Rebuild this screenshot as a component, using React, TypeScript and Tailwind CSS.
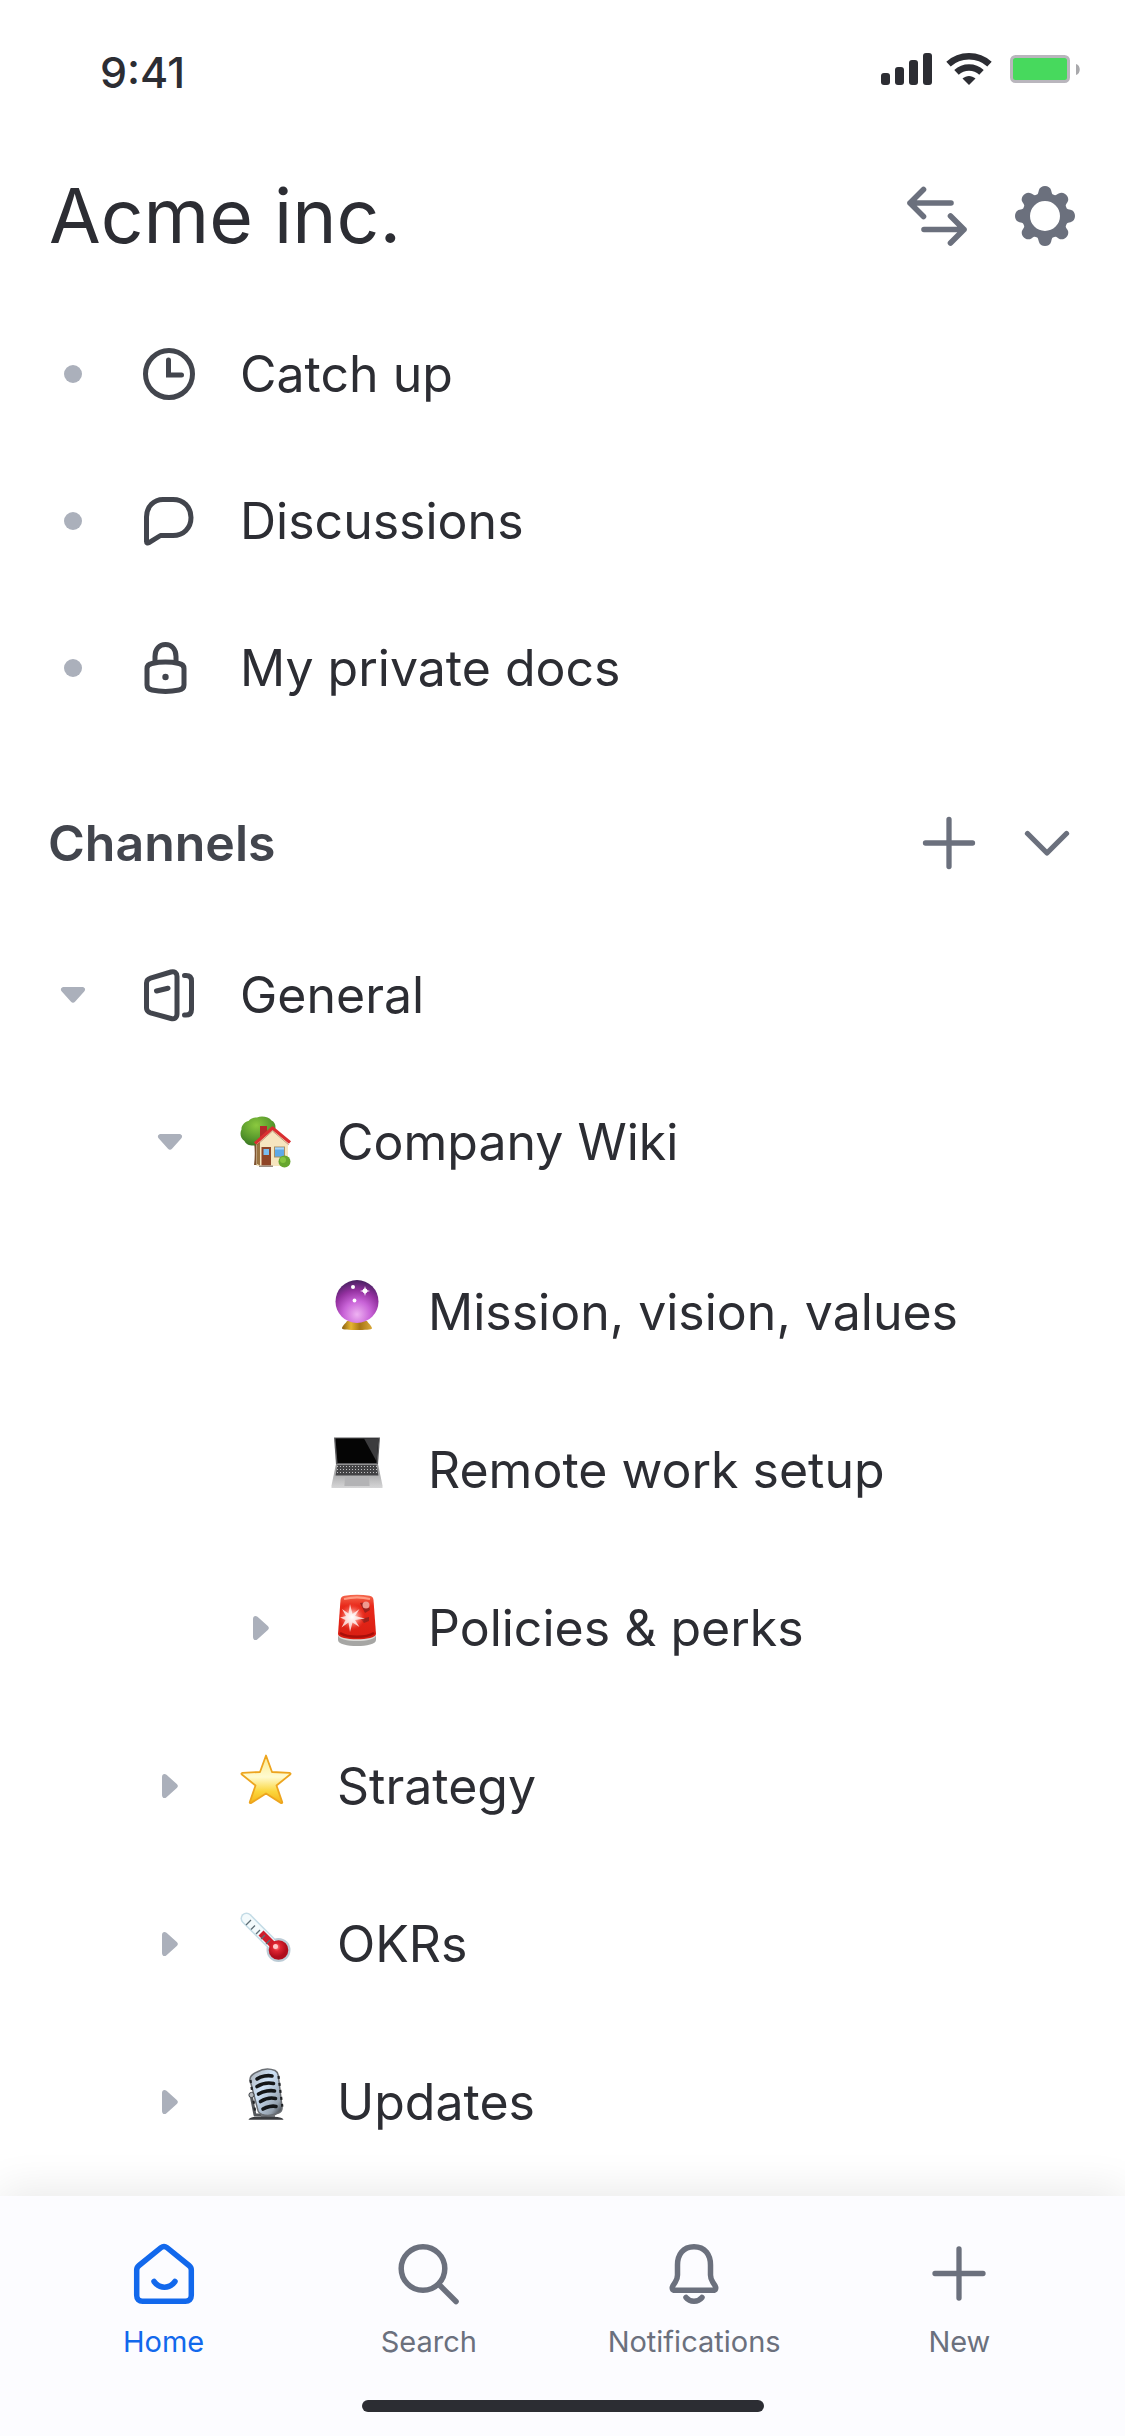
import type { ReactNode } from "react";

const stroke = {
  fill: "none",
  stroke: "currentColor",
  strokeLinecap: "round" as const,
  strokeLinejoin: "round" as const,
};

/* ---------- Status bar ---------- */

function Signal() {
  return (
    <svg width="52" height="34" viewBox="0 0 52 34" fill="currentColor" aria-label="Signal">
      <rect x="0" y="21" width="9" height="12" rx="3" />
      <rect x="14" y="15" width="9" height="18" rx="3" />
      <rect x="28" y="8" width="9" height="25" rx="3" />
      <rect x="42" y="1" width="9" height="32" rx="3" />
    </svg>
  );
}

function Wifi() {
  return (
    <svg width="48" height="34" viewBox="0 0 48 34" fill="none" stroke="currentColor" aria-label="Wi-Fi">
      <path d="M3.500 12.200C15 1.700 33 1.700 44.500 12.200" strokeWidth="6.500" />
      <path d="M11.500 20.400C18.500 13.800 29.500 13.800 36.500 20.400" strokeWidth="6.500" />
      <path d="M17.500 26.600C21.500 23.200 26.500 23.200 30.500 26.600L24 33Z" fill="currentColor" stroke="none" />
    </svg>
  );
}

function Battery() {
  return (
    <svg width="71" height="30" viewBox="0 0 71 30" aria-label="Battery">
      <rect x="1.500" y="2.500" width="57" height="25" rx="4" fill="#47d95d" stroke="#b9b6bd" strokeWidth="3" />
      <path d="M66 10v11c5-1 5-10 0-11Z" fill="#a9a9ac" />
    </svg>
  );
}

/* ---------- Interface icons ---------- */

function SwapIcon() {
  return (
    <svg width="62" height="62" viewBox="0 0 62 62" {...stroke} strokeWidth="5.600">
      <path d="M45 18H4M17.500 4.500L4 18l13.500 13.500" />
      <path d="M18 44.500h40M44.500 31L58 44.500 44.500 58" />
    </svg>
  );
}

const toothAngles = [0, 45, 90, 135, 180, 225, 270, 315];

function GearIcon() {
  return (
    <svg width="62" height="62" viewBox="-31 -31 62 62" fill="currentColor">
      <circle r="19" fill="none" stroke="currentColor" strokeWidth="8" />
      {toothAngles.map((a) => (
        <path
          key={a}
          transform={`rotate(${a})`}
          d="M-11 -19C-7.500 -20-7 -22-6.200 -25.500C-5 -31.500 5 -31.500 6.200 -25.500C7 -22 7.500 -20 11 -19Z"
        />
      ))}
    </svg>
  );
}

function ClockIcon() {
  return (
    <svg width="54" height="54" viewBox="0 0 54 54" {...stroke} strokeWidth="5">
      <circle cx="27" cy="27" r="23.500" />
      <path d="M26.500 13v15h13" strokeLinejoin="miter" />
    </svg>
  );
}

function BubbleIcon() {
  return (
    <svg width="54" height="54" viewBox="0 0 54 54" {...stroke} strokeWidth="5">
      <path d="M4.500 47.500V23C4.500 12.500 12 5.500 21 5.500h10C41.500 5.500 49 13 49 23.500S41.500 41.500 31 41.500H18.500L7 48.700c-1.400.8-2.500.2-2.500-1.200Z" />
    </svg>
  );
}

function LockIcon() {
  return (
    <svg width="54" height="54" viewBox="0 0 54 54" {...stroke} strokeWidth="5">
      <path d="M13 21.500v-6C13 8 17.500 3.500 23.500 3.500S34 8 34 15.500v6" />
      <path d="M10 22.500c8-1.700 19-1.700 27 0 3 .6 5 2.500 5 5V44c0 2.500-2 4.400-5 5-8 1.700-19 1.700-27 0-3-.6-5-2.500-5-5V27.500c0-2.500 2-4.400 5-5Z" />
      <circle cx="23.500" cy="36" r="3.200" fill="currentColor" stroke="none" />
    </svg>
  );
}

function BookIcon() {
  return (
    <svg width="54" height="54" viewBox="0 0 54 54" {...stroke} strokeWidth="5">
      <path d="M8.500 10.200L29 4c3.500-1 6 1 6 4.500V46c0 3.500-2.500 5.500-6 4.500L8.500 44.800c-2.500-.8-4-2.300-4-4.800V15c0-2.500 1.500-4 4-4.800Z" />
      <path d="M14.500 23l11.500-2.800" />
      <path d="M42.500 7.500h1.500c3.500 0 5.500 2 5.500 5.500v28.500c0 3.500-2 5.500-5.500 5.500h-1.500" />
    </svg>
  );
}

function PlusIcon() {
  return (
    <svg width="60" height="60" viewBox="0 0 60 60" {...stroke} strokeWidth="5.300">
      <path d="M30 6.500v47M6.500 30h47" />
    </svg>
  );
}

function ChevronIcon() {
  return (
    <svg width="60" height="60" viewBox="0 0 60 60" {...stroke} strokeWidth="5.300">
      <path d="M10.500 20.500L30 40l19.500-19.500" />
    </svg>
  );
}

function Dot() {
  return <span className="size-[18px] rounded-full bg-[#abb0bb]" />;
}

function TriangleDown() {
  return (
    <svg width="26" height="18" viewBox="0 0 26 18" fill="#abb0bb">
      <path d="M4 1h18c3 0 4 2.500 2.200 4.500L15 15.800c-1.200 1.400-2.800 1.400-4 0L1.800 5.500C0 3.500 1 1 4 1Z" />
    </svg>
  );
}

function TriangleRight() {
  return (
    <svg width="18" height="26" viewBox="0 0 18 26" fill="#abb0bb">
      <path d="M1 4v18c0 3 2.500 4 4.500 2.200L15.800 15c1.400-1.200 1.400-2.800 0-4L5.500 1.800C3.500 0 1 1 1 4Z" />
    </svg>
  );
}

/* ---------- Page pictograms ---------- */

function HouseEmoji() {
  return (
    <svg width="54" height="54" viewBox="0 0 54 54">
      <defs>
        <radialGradient id="tree" cx=".45" cy=".3" r=".7">
          <stop offset="0" stopColor="#8bc93f" />
          <stop offset=".7" stopColor="#55962b" />
          <stop offset="1" stopColor="#3c7a25" />
        </radialGradient>
      </defs>
      <path d="M15 27h6v23h-6c1-8 1-15 0-23Z" fill="#7d5230" />
      <path
        d="M18 2.500c5-2 12-.5 14.500 3 4 1.500 5 7 3 11-1.500 4-6 6-8 9-2 4-6 6-9.500 4.500C13 31.500 7 30 5.500 26 1.500 24 .5 18 2.500 14.500 2 10 6.500 6.500 9.500 6c2-2.500 5-3.500 8.500-3.500Z"
        fill="url(#tree)"
      />
      <path d="M21 11h7v12h-7z" fill="#b5282b" />
      <path d="M17.500 28L34 13l15 15v23H17.500z" fill="#f6e5bf" />
      <path d="M18 29v20l3 1.500V27z" fill="#9a7341" />
      <path d="M16 28.500L33.500 13 51 27.500" fill="none" stroke="#d92f31" strokeWidth="3.200" strokeLinejoin="round" />
      <path d="M18 30L33.500 16 50 30" fill="none" stroke="#8b4a35" strokeWidth=".8" opacity=".6" />
      <rect x="22.500" y="32" width="9.500" height="18.500" fill="#8f4527" />
      <rect x="24.500" y="34" width="5.500" height="6" fill="#79bdf0" />
      <rect x="35.500" y="32" width="10" height="10" fill="#5ea9e8" stroke="#a98f63" />
      <path d="M36 32.500h9v2h-9z" fill="#a5d5fa" />
      <path d="M20 50.500h14v1.500H20z" fill="#9a8f85" />
      <circle cx="45.500" cy="46.500" r="6" fill="#66a62f" />
      <circle cx="44" cy="45" r="3" fill="#86c541" />
    </svg>
  );
}

function CrystalEmoji() {
  return (
    <svg width="54" height="54" viewBox="0 0 54 54">
      <defs>
        <radialGradient id="orb" cx=".5" cy=".8" r=".78">
          <stop offset="0" stopColor="#eeb2f2" />
          <stop offset=".4" stopColor="#c964d8" />
          <stop offset=".72" stopColor="#93309f" />
          <stop offset="1" stopColor="#4d2265" />
        </radialGradient>
        <linearGradient id="brass" x1="0" x2="1">
          <stop offset="0" stopColor="#8a5f12" />
          <stop offset=".3" stopColor="#e6b530" />
          <stop offset=".6" stopColor="#a87613" />
          <stop offset="1" stopColor="#d9a93a" />
        </linearGradient>
      </defs>
      <path d="M17 43h20c1.500 2.500 5 5 5 7.500 0 2-30 2-30 0 0-2.500 3.500-5 5-7.500Z" fill="url(#brass)" />
      <circle cx="27" cy="23.500" r="21.500" fill="url(#orb)" />
      <circle cx="23" cy="9" r="2" fill="#fff" />
      <path d="M35 8l1 4 4 1-4 1-1 4-1-4-4-1 4-1z" fill="#fff" />
      <circle cx="35" cy="13" r="2.400" fill="#fff" />
      <circle cx="24.500" cy="22.500" r="1.900" fill="#fff" />
    </svg>
  );
}

const keyRows = [30.5, 33.5, 36.5];

function LaptopEmoji() {
  return (
    <svg width="54" height="54" viewBox="0 0 54 54">
      <defs>
        <linearGradient id="body" x1="0" x2="0" y1="0" y2="1">
          <stop offset="0" stopColor="#8f8f90" />
          <stop offset="1" stopColor="#d6d6d7" />
        </linearGradient>
      </defs>
      <path d="M4 1.500h46l-2 27H6z" fill="#5b5b5d" />
      <path d="M5.500 2.500h43l-2 24.500H7.500z" fill="#050505" />
      <path d="M34 2.500h14.500l-1.900 23z" fill="#3c3c3e" />
      <path d="M6 28h42l4.500 21.500v2.500H1.500v-2.500z" fill="url(#body)" />
      <path d="M7.500 29h39l2 10.500h-43z" fill="#444446" />
      {keyRows.map((y) => (
        <path key={y} d={`M7 ${y}h40`} stroke="#c3c3c4" strokeWidth="1.200" strokeDasharray="1 2" />
      ))}
      <path d="M15 41h24l.6 9H14.400z" fill="#b3b3b5" />
    </svg>
  );
}

function SirenEmoji() {
  return (
    <svg width="54" height="54" viewBox="0 0 54 54">
      <defs>
        <linearGradient id="lamp" x1="0" x2="0" y1="0" y2="1">
          <stop offset="0" stopColor="#f4694f" />
          <stop offset=".25" stopColor="#e92a1b" />
          <stop offset="1" stopColor="#d81d12" />
        </linearGradient>
        <radialGradient id="flare">
          <stop offset="0" stopColor="#fff" />
          <stop offset=".4" stopColor="#ffb5aa" stopOpacity=".8" />
          <stop offset="1" stopColor="#ff5040" stopOpacity="0" />
        </radialGradient>
      </defs>
      <path d="M8 42h38v4c0 8-38 8-38 0z" fill="#a6a6a4" />
      <path d="M8 41h38c0 8-38 8-38 0z" fill="#dadad7" />
      <path d="M10.500 6c.3-3 1.500-3.800 4-4.300 8-1.300 17-1.300 25 0 2.500.5 3.700 1.300 4 4.300L46 40c0 7-38 7-38 0z" fill="url(#lamp)" />
      <path d="M10 39c8 5 26 5 34 0" fill="none" stroke="#a80f0a" strokeWidth="2.500" />
      <path d="M14 5c8-2 18-2 26 0" fill="none" stroke="#ff9b83" strokeWidth="2" />
      <path d="M30 9l8-1 2 8-5 3zM31 25l8-2v4l-5 2z" fill="#9e211c" />
      <circle cx="36" cy="11" r="3.500" fill="#ef9a90" />
      <circle cx="22" cy="23" r="13" fill="url(#flare)" />
      <path
        d="M20 10l2.500 10 7-5-4.500 7 10 2.500-10 1.500 4.500 7-7-4.500L20 38l-1.500-9.500-7 5 4-7.500-5.500-2.500 6-1.500-4-7 6.500 4.500z"
        fill="#fff"
        opacity=".75"
      />
    </svg>
  );
}

function StarEmoji() {
  return (
    <svg width="54" height="54" viewBox="0 0 54 54">
      <defs>
        <linearGradient id="star" x1="0" x2="0" y1="0" y2="1">
          <stop offset="0" stopColor="#fbe98a" />
          <stop offset=".45" stopColor="#fffbd0" />
          <stop offset=".75" stopColor="#fbd63e" />
          <stop offset="1" stopColor="#f6b416" />
        </linearGradient>
      </defs>
      <path
        d="M27 3.500l6 16.500 17.500.8c1.200.1 1.400 1 .6 1.700L37.500 33.500 43.200 50c.3 1-.5 1.500-1.400 1L27 41.500 12.200 51c-.9.500-1.700 0-1.400-1l5.700-16.500L2.900 22.500c-.8-.7-.6-1.600.6-1.700L21 20z"
        fill="url(#star)"
        stroke="#eda51f"
        strokeWidth="1.800"
        strokeLinejoin="round"
      />
    </svg>
  );
}

function ThermometerEmoji() {
  return (
    <svg width="54" height="54" viewBox="0 0 54 54">
      <defs>
        <radialGradient id="bulb" cx=".4" cy=".35">
          <stop offset="0" stopColor="#ff8d8d" />
          <stop offset=".4" stopColor="#de2531" />
          <stop offset="1" stopColor="#b00d1c" />
        </radialGradient>
      </defs>
      <path d="M7.500 8.500L36 37" stroke="#c4dce6" strokeWidth="12" strokeLinecap="round" />
      <circle cx="39.500" cy="40" r="12" fill="#bcccd6" />
      <path d="M7.500 8.500L36 37" stroke="#f3fafc" strokeWidth="9" strokeLinecap="round" />
      <path d="M22 23l14 14" stroke="#cf1c2b" strokeWidth="7" />
      <path d="M7 15l5-5M12 19.500l4-4M17 24l4-4M22 29l4-4M27 34l4-4" stroke="#5c6d75" strokeWidth="1.300" />
      <circle cx="39.500" cy="40" r="9.800" fill="url(#bulb)" />
      <circle cx="36.500" cy="36.500" r="2.500" fill="#ffc9c9" />
    </svg>
  );
}

function MicEmoji() {
  return (
    <svg width="54" height="54" viewBox="0 0 54 54">
      <defs>
        <linearGradient id="mic" x1="0" x2="1" y1="0" y2="1">
          <stop offset="0" stopColor="#a9adb2" />
          <stop offset=".4" stopColor="#cfe3f8" />
          <stop offset=".8" stopColor="#94a0ad" />
          <stop offset="1" stopColor="#2b2d30" />
        </linearGradient>
      </defs>
      <path d="M12 27l4 20h18l8-6" fill="none" stroke="#55585c" strokeWidth="3" strokeLinejoin="round" />
      <path d="M22 45h14v5H22z" fill="#777b80" />
      <path d="M11 51c2-2.500 30-2.500 32 0z" fill="#3b3d40" stroke="#3b3d40" strokeWidth="1.500" />
      <path
        d="M18 4c6-3.500 13-3.500 18-1.500 2 1 3 3 3.300 5L43 39c.4 3-1 5-3.500 6-6 2.500-12 3-16.500 1.500-2.500-1-4-2.500-4.300-5L11 12c-.3-4 3.500-6.500 7-8Z"
        fill="url(#mic)"
        stroke="#6a6e73"
        strokeWidth="1.500"
      />
      <path
        d="M18 11c4-3 11-4 15-3M18 18.500c5-3 12-4 16.500-3M19.500 26c5-3 12-4 16-3M21.500 33.500c5-3 11-4 15-3M24 41c4-2.500 10-3.500 13-2.500"
        fill="none"
        stroke="#141618"
        strokeWidth="3.600"
        strokeLinecap="round"
      />
      <path d="M11.500 12L16 43M39.500 8L43.500 40" stroke="#222427" strokeWidth="2.200" strokeDasharray="3 4" />
      <circle cx="12.500" cy="27" r="2.600" fill="#b5bac0" stroke="#44474b" />
    </svg>
  );
}

/* ---------- Tab bar icons ---------- */

function HomeIcon() {
  return (
    <svg width="64" height="64" viewBox="0 0 64 64" {...stroke} strokeWidth="5.500">
      <path d="M29 5.700c1.800-1.400 4.200-1.400 6 0L57 23.500c1.600 1.300 2.300 2.500 2.300 4.500v25.500c0 3.500-2.300 5.800-5.800 5.800h-43c-3.500 0-5.800-2.300-5.800-5.800V28c0-2 .7-3.200 2.300-4.500Z" />
      <path d="M22 39.500c5.500 7.500 15.500 7.500 21 0" />
    </svg>
  );
}

function SearchIcon() {
  return (
    <svg width="64" height="64" viewBox="0 0 64 64" {...stroke} strokeWidth="5.500">
      <circle cx="26" cy="26.500" r="21.800" />
      <path d="M42 42.500L59 59.500" />
    </svg>
  );
}

function BellIcon() {
  return (
    <svg width="64" height="64" viewBox="0 0 64 64" {...stroke} strokeWidth="5.500">
      <path d="M32 4.700C21 4.700 15.500 13 15.500 23v10c0 3-.8 5-2.300 7.300l-2.300 3.500c-1.300 2.200-.6 4.500 2 4.500h38.200c2.600 0 3.300-2.300 2-4.500l-2.300-3.500c-1.500-2.300-2.300-4.300-2.300-7.300V23C48.500 13 43 4.700 32 4.700Z" />
      <path d="M24 55.500c4 5 12 5 16 0" />
    </svg>
  );
}

function NewIcon() {
  return (
    <svg width="64" height="64" viewBox="0 0 64 64" {...stroke} strokeWidth="5.300">
      <path d="M32 7v49M8 31.500h48" />
    </svg>
  );
}

/* ---------- Lists ---------- */

function Row({
  marker,
  icon,
  label,
  inset = "pl-[60px]",
  tall = false,
}: {
  marker?: ReactNode;
  icon: ReactNode;
  label: string;
  inset?: string;
  tall?: boolean;
}) {
  return (
    <button type="button" className={`flex w-full items-center text-left ${inset} ${tall ? "h-[158px]" : "h-[147px]"}`}>
      <span className="flex w-[26px] shrink-0 justify-center">{marker}</span>
      <span className={`ml-14 w-[54px] shrink-0 text-[#42454d] ${tall ? "pb-[14px]" : ""}`}>{icon}</span>
      <span className="ml-11 text-[50px] leading-[60px]">{label}</span>
    </button>
  );
}

function Tab({ icon, label, active = false }: { icon: ReactNode; label: string; active?: boolean }) {
  return (
    <button
      type="button"
      aria-current={active ? "page" : undefined}
      className={`flex flex-1 flex-col items-center gap-[18px] ${active ? "text-[#1268ec]" : "text-[#6b707d]"}`}
    >
      {icon}
      <span className="text-[29px] leading-9">{label}</span>
    </button>
  );
}

export default function App() {
  return (
    <div className="flex min-h-screen flex-col bg-white font-['Inter','Liberation_Sans',sans-serif] text-[#2c2d33]">
      <div className="flex h-[138px] items-center justify-between pr-11 pl-[100px]">
        <span className="pt-1.5 text-[43px] leading-[50px] font-medium">9:41</span>
        <span className="flex items-center">
          <Signal />
          <span className="ml-3">
            <Wifi />
          </span>
          <span className="ml-[17px]">
            <Battery />
          </span>
        </span>
      </div>

      <header className="flex h-[162px] items-center justify-between pr-[49px] pb-1.5 pl-[49px]">
        <h1 className="text-[75px] leading-[88px]">Acme inc.</h1>
        <div className="flex gap-[46px] text-[#6b707d]">
          <button type="button" aria-label="Switch workspace">
            <SwapIcon />
          </button>
          <button type="button" aria-label="Settings">
            <GearIcon />
          </button>
        </div>
      </header>

      <main className="pb-[14px]">
        <ul>
          <li><Row marker={<Dot />} icon={<ClockIcon />} label="Catch up" /></li>
          <li><Row marker={<Dot />} icon={<BubbleIcon />} label="Discussions" /></li>
          <li><Row marker={<Dot />} icon={<LockIcon />} label="My private docs" /></li>
        </ul>

        <div className="mt-6 flex h-[156px] items-center justify-between pr-12 pl-12">
          <h2 className="text-[50px] leading-[60px] font-semibold text-[#42454d]">Channels</h2>
          <div className="flex gap-[38px] text-[#6b707d]">
            <button type="button" aria-label="Add channel">
              <PlusIcon />
            </button>
            <button type="button" aria-label="Collapse channels">
              <ChevronIcon />
            </button>
          </div>
        </div>

        <ul>
          <li>
            <Row marker={<TriangleDown />} icon={<BookIcon />} label="General" />
            <ul>
              <li>
                <Row marker={<TriangleDown />} icon={<HouseEmoji />} label="Company Wiki" inset="pl-[157px]" />
                <ul className="pt-[18px]">
                  <li><Row tall icon={<CrystalEmoji />} label="Mission, vision, values" inset="pl-[248px]" /></li>
                  <li><Row tall icon={<LaptopEmoji />} label="Remote work setup" inset="pl-[248px]" /></li>
                  <li><Row tall marker={<TriangleRight />} icon={<SirenEmoji />} label="Policies & perks" inset="pl-[248px]" /></li>
                </ul>
              </li>
              <li><Row tall marker={<TriangleRight />} icon={<StarEmoji />} label="Strategy" inset="pl-[157px]" /></li>
              <li><Row tall marker={<TriangleRight />} icon={<ThermometerEmoji />} label="OKRs" inset="pl-[157px]" /></li>
              <li><Row tall marker={<TriangleRight />} icon={<MicEmoji />} label="Updates" inset="pl-[157px]" /></li>
            </ul>
          </li>
        </ul>
      </main>

      <nav
        aria-label="Main"
        className="mt-auto bg-[#fcfcff] pt-[46px] pb-6 shadow-[0_-6px_40px_rgba(0,0,0,0.09)]"
      >
        <div className="flex pr-[33px] pl-[31px]">
          <Tab active icon={<HomeIcon />} label="Home" />
          <Tab icon={<SearchIcon />} label="Search" />
          <Tab icon={<BellIcon />} label="Notifications" />
          <Tab icon={<NewIcon />} label="New" />
        </div>
        <div className="mx-auto mt-10 h-3 w-[402px] rounded-full bg-[#2c2d33]" />
      </nav>
    </div>
  );
}
